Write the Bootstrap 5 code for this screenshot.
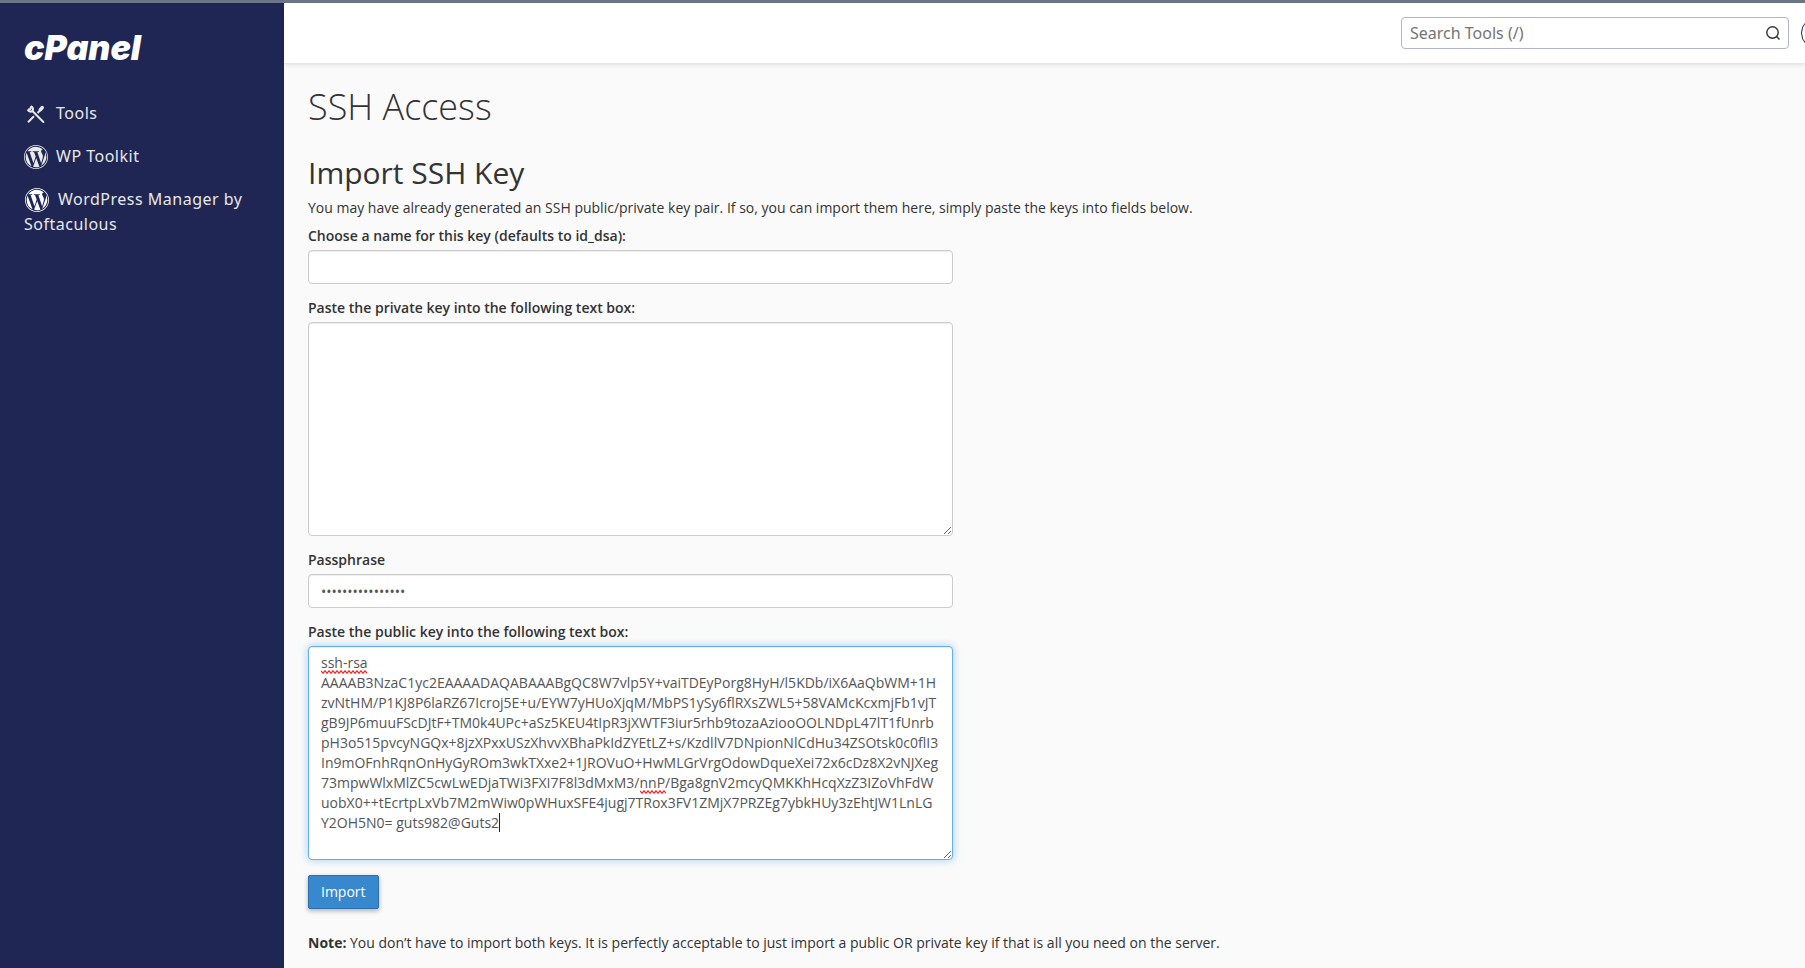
<!DOCTYPE html>
<html lang="en">
<head>
<meta charset="utf-8">
<meta name="viewport" content="width=device-width, initial-scale=1">
<title>cPanel - SSH Access</title>
<link href="https://cdn.jsdelivr.net/npm/bootstrap@5.3.0/dist/css/bootstrap.min.css" rel="stylesheet">
<style>
  body { font-family: "Open Sans", sans-serif; font-size: 14px; line-height: 20px; color: #333; background: #fafafa; border-top: 3px solid #6a7688; overflow-x: hidden; }
  .side-nav { width: 284px; background: #202653; padding: 25px 24px; }
  .side-nav a { color: #e8e8e8; font-family: "Noto Sans", sans-serif; font-size: 16px; line-height: 24px; letter-spacing: 0.5px; text-decoration: none; }
  .side-nav li { margin-bottom: 18px; line-height: 24px; }
  .side-nav svg { margin-right: 8px; vertical-align: -7px; fill: #e8e8e8; }
  .side-nav svg.softaculous { margin: 0 9px 0 1px; fill: #fff; }
  .side-nav .brand { display: block; font-family: Inter, sans-serif; font-size: 34px; line-height: 40px; font-weight: 900; font-style: italic; letter-spacing: normal; color: #fff; margin-bottom: 33px; }
  .top-bar { height: 60px; background: #fff; box-shadow: 0 1px 5px rgba(0,0,0,.15); padding-left: 24px; }
  .tool-search { width: 388px; height: 32px; margin-right: 12px; padding-right: 7px; border: 1px solid #b4b4c8; border-radius: 4px; background: #fff; }
  .tool-search input { font-family: "Noto Sans", sans-serif; font-size: 16px; line-height: 24px; color: #333; padding: 0 8px; }
  .tool-search input::placeholder { color: #757575; }
  .user-btn { width: 32px; height: 32px; margin-right: -28px; border: 1px solid #202653; border-radius: 50%; background: #fff; }
  .content { padding: 24px; }
  h1 { font-size: 36px; line-height: 40px; font-weight: 300; margin-bottom: 29px; }
  h2 { font-size: 30px; line-height: 33px; font-weight: 500; margin-bottom: 9px; }
  .key-form { max-width: 645px; }
  .key-form label { font-weight: 600; margin-bottom: 4px; display: block; }
  .key-form .form-control { font-size: 14px; line-height: 20px; padding: 6px 12px; color: #555; border-color: #ccc; border-radius: 4px; box-shadow: inset 0 1px 1px rgba(0,0,0,.075); }
  .key-form input.form-control { height: 34px; }
  .key-form textarea.form-control { height: 214px; }
  .key-form textarea.is-active { border-color: #66afe9; box-shadow: inset 0 1px 1px rgba(0,0,0,.075), 0 0 8px rgba(102,175,233,.6); }
  .field { margin-bottom: 14px; }
  /* spelling marks and text cursor shown over the public key */
  .spell-mark { position: absolute; height: 4px; fill: none; stroke: #f22; stroke-width: 1.2; pointer-events: none; }
  .mark-first { left: 13px; top: 24px; width: 47px; }
  .mark-second { left: 332px; top: 144px; width: 26px; }
  .text-cursor { position: absolute; left: 191px; top: 167px; width: 1px; height: 19px; background: #222; pointer-events: none; }
  .btn-import { font-size: 14px; line-height: 20px; padding: 6px 12px; margin-top: 1px; color: #fff; background: #3888ce; border: 1px solid #2c70b4; border-radius: 2px; box-shadow: 0 2px 5px rgba(0,0,0,.3); }
</style>
</head>
<body>
<svg class="d-none" aria-hidden="true">
  <symbol id="wp" viewBox="0 0 16 16">
    <path d="M12.633 7.653c0-.848-.305-1.435-.566-1.892l-.08-.13c-.317-.51-.594-.958-.594-1.48 0-.63.478-1.218 1.152-1.218.02 0 .039.002.058.003l.031.003A6.838 6.838 0 0 0 8 1.137 6.855 6.855 0 0 0 2.266 4.23c.16.005.313.009.442.009.717 0 1.828-.087 1.828-.087.37-.022.414.521.044.565 0 0-.371.044-.785.065l2.5 7.434 1.5-4.506-1.07-2.929c-.369-.022-.719-.065-.719-.065-.37-.022-.326-.588.043-.566 0 0 1.134.087 1.808.087.718 0 1.83-.087 1.83-.087.37-.022.413.522.043.566 0 0-.372.043-.785.065l2.48 7.377.684-2.287.054-.173c.27-.86.469-1.495.469-2.046zM1.137 8a6.864 6.864 0 0 0 3.868 6.176L1.73 5.206A6.837 6.837 0 0 0 1.137 8z"/>
    <path d="M6.061 14.583 8.121 8.6l2.109 5.78c.014.033.03.064.049.094a6.854 6.854 0 0 1-4.218.109zm7.96-9.876c.03.219.047.453.047.706 0 .696-.13 1.479-.522 2.458l-2.096 6.06a6.86 6.86 0 0 0 2.572-9.224z"/>
    <path fill-rule="evenodd" d="M0 8c0-4.411 3.589-8 8-8 4.41 0 8 3.589 8 8s-3.59 8-8 8c-4.411 0-8-3.589-8-8zm.5 0c0 4.14 3.36 7.5 7.5 7.5s7.5-3.36 7.5-7.5S12.14.5 8 .5.5 3.86.5 8z"/>
  </symbol>
</svg>
<div class="d-flex min-vh-100">
  <nav class="side-nav flex-shrink-0" aria-label="Main">
    <a class="brand" href="#">cPanel</a>
    <ul class="list-unstyled mb-0">
      <li><a href="#"><svg width="24" height="24" viewBox="0 0 24 24" aria-hidden="true"><g fill="none" stroke="#e8e8e8"><path stroke-width="2" d="M6.8 4.3A3 3 0 0 1 8.3 9.2 3 3 0 0 1 3.8 7.4M4 7.6l2.2-.2.8-3"/><path stroke-width="2" stroke-linecap="round" d="M8.4 9 19.4 20"/><path stroke-width="3.6" stroke-linecap="round" d="M18.2 5.6 16.4 7.6"/><path stroke-width="2" d="M17 7.5l-3.5 3.5M10 14.2 4 20.2"/></g></svg>Tools</a></li>
      <li><a href="#"><svg width="24" height="24" aria-hidden="true"><use href="#wp"/></svg>WP Toolkit</a></li>
      <li><a href="#"><svg class="softaculous" width="24" height="24" aria-hidden="true"><use href="#wp"/></svg>WordPress Manager by Softaculous</a></li>
    </ul>
  </nav>
  <div class="flex-grow-1">
    <header class="top-bar d-flex align-items-center justify-content-end">
      <div class="tool-search d-flex align-items-center">
        <input class="border-0 bg-transparent flex-grow-1" type="search" placeholder="Search Tools (/)" aria-label="Search Tools">
        <svg width="16" height="16" viewBox="0 0 16 16" fill="none" stroke="#333" stroke-width="1.4" aria-hidden="true"><circle cx="7.5" cy="7.5" r="5.7"/><path d="m11.6 11.6 2.9 2.9"/></svg>
      </div>
      <button class="user-btn" type="button" aria-label="Account"></button>
    </header>
    <main class="content">
      <h1>SSH Access</h1>
      <h2>Import SSH Key</h2>
      <p class="mb-2">You may have already generated an SSH public/private key pair. If so, you can import them here, simply paste the keys into fields below.</p>
      <form class="key-form">
        <div class="field"><label for="name">Choose a name for this key (defaults to id_dsa):</label><input id="name" class="form-control" type="text"></div>
        <div class="field"><label for="priv">Paste the private key into the following text box:</label><textarea id="priv" class="form-control"></textarea></div>
        <div class="field"><label for="pass">Passphrase</label><input id="pass" class="form-control" type="password" value="abcdefghijklmnop"></div>
        <div class="field">
          <label for="pub">Paste the public key into the following text box:</label>
          <div class="position-relative">
            <textarea id="pub" class="form-control is-active" spellcheck="false">ssh-rsa AAAAB3NzaC1yc2EAAAADAQABAAABgQC8W7vlp5Y+vaiTDEyPorg8HyH/l5KDb/iX6AaQbWM+1HzvNtHM/P1KJ8P6laRZ67Icroj5E+u/EYW7yHUoXjqM/MbPS1ySy6flRXsZWL5+58VAMcKcxmjFb1vJTgB9JP6muuFScDJtF+TM0k4UPc+aSz5KEU4tIpR3jXWTF3iur5rhb9tozaAziooOOLNDpL47lT1fUnrbpH3o515pvcyNGQx+8jzXPxxUSzXhvvXBhaPkIdZYEtLZ+s/KzdllV7DNpionNlCdHu34ZSOtsk0c0flI3In9mOFnhRqnOnHyGyROm3wkTXxe2+1JROVuO+HwMLGrVrgOdowDqueXei72x6cDz8X2vNJXeg73mpwWlxMlZC5cwLwEDjaTWi3FXI7F8l3dMxM3/nnP/Bga8gnV2mcyQMKKhHcqXzZ3IZoVhFdWuobX0++tEcrtpLxVb7M2mWiw0pWHuxSFE4jugj7TRox3FV1ZMjX7PRZEg7ybkHUy3zEhtJW1LnLGY2OH5N0= guts982@Guts2</textarea>
            <svg class="spell-mark mark-first" aria-hidden="true"><path d="M0 .8l2 2.4 2-2.4 2 2.4 2-2.4 2 2.4 2-2.4 2 2.4 2-2.4 2 2.4 2-2.4 2 2.4 2-2.4 2 2.4 2-2.4 2 2.4 2-2.4 2 2.4 2-2.4 2 2.4 2-2.4 2 2.4 2-2.4 2 2.4"/></svg>
            <svg class="spell-mark mark-second" aria-hidden="true"><path d="M0 .8l2 2.4 2-2.4 2 2.4 2-2.4 2 2.4 2-2.4 2 2.4 2-2.4 2 2.4 2-2.4 2 2.4 2-2.4 2 2.4"/></svg>
            <span class="text-cursor"></span>
          </div>
        </div>
        <button class="btn-import" type="button">Import</button>
      </form>
      <p class="mt-4 mb-0"><b>Note:</b> You don’t have to import both keys. It is perfectly acceptable to just import a public OR private key if that is all you need on the server.</p>
    </main>
  </div>
</div>
<script src="https://cdn.jsdelivr.net/npm/bootstrap@5.3.0/dist/js/bootstrap.bundle.min.js"></script>
</body>
</html>
